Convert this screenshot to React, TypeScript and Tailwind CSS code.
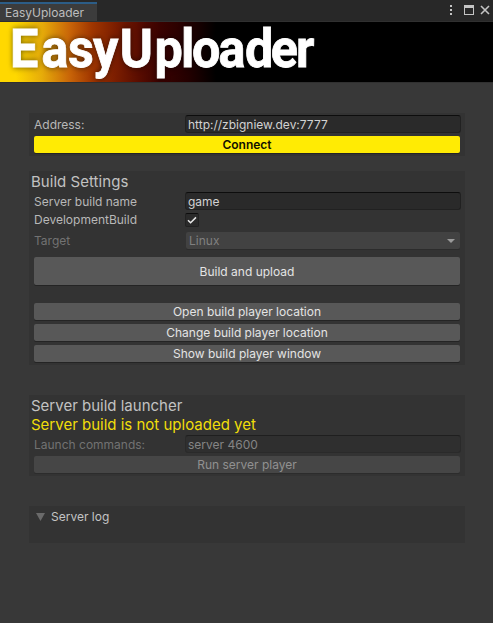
import React from "react";

function Label({ children, dim }: { children: React.ReactNode; dim?: boolean }) {
  return <span className={`block w-[151px] shrink-0 pt-px ${dim ? "text-[#727272]" : "text-[#b8b8b8]"}`}>{children}</span>;
}

function Field({ value, dim }: { value: string; dim?: boolean }) {
  return (
    <div
      className={`flex h-[18px] w-[276px] items-center rounded-[3px] border pt-[2px] pl-[2px] ${
        dim
          ? "border-[#2a2a2a] border-t-[#1f1f1f] bg-[#2f2f2f] text-[#858585]"
          : "border-[#212121] border-t-[#0d0d0d] bg-[#2a2a2a] text-[#d2d2d2]"
      }`}
    >
      {value}
    </div>
  );
}

function Button({ children, look = "bg-[#585858] text-[#e4e4e4] shadow-[0_1px_0_#242424]", size = "h-[17px]" }: {
  children: React.ReactNode;
  look?: string;
  size?: string;
}) {
  return (
    <button className={`mx-auto flex w-[426px] shrink-0 items-center justify-center rounded-[2px] ${size} ${look}`}>
      {children}
    </button>
  );
}

function Panel({ children, size }: { children?: React.ReactNode; size: string }) {
  return <section className={`ml-[29px] flex w-[436px] flex-col bg-[#333333] ${size}`}>{children}</section>;
}

export default function App() {
  return (
    <main className="flex h-[623px] w-[493px] flex-col overflow-hidden bg-[#383838] font-['Inter',sans-serif] text-[12px] leading-[18px] whitespace-nowrap">
      <header className="flex h-[22px] shrink-0 items-end justify-between border-b border-[#303030] bg-[#282828]">
        <div className="flex h-[19px] w-[97px] items-center border-t-2 border-[#2c5d87] bg-[#3c3c3c] pl-[5px] pt-px leading-[14px] text-[#bdbdbd]">
          EasyUploader
        </div>
        <svg className="h-[21px] w-[48px]" viewBox="445 0 48 21" shapeRendering="crispEdges">
          <path fill="#c4c4c4" d="M450 5h2v2h-2zM450 9h2v2h-2zM450 13h2v2h-2z" />
          <path fill="#c4c4c4" fillRule="evenodd" d="M464 5h10v10h-10zM465 8v6h8V8z" />
          <path shapeRendering="auto" fill="none" stroke="#c4c4c4" strokeWidth="1.6" d="M481 6l8 8M489 6l-8 8" />
        </svg>
      </header>
      <div className="h-[60px] shrink-0 bg-[linear-gradient(90deg,#ffd800_0px,#ffd800_16px,#e6ac0a_42px,#c86408_70px,#a03600_92px,#7c1e00_115px,#580c00_140px,#3a0200_160px,#240000_188px,#000000_216px)]">
        <svg className="h-[60px] w-[493px]" viewBox="0 0 493 60">
          <text
            transform="scale(0.95 1)"
            x="10.5 43.7 71.6 97.9 126 162.6 190.5 202 230 258 285 311.5"
            y="45"
            fill="#ffffff"
            stroke="#ffffff"
            strokeWidth="0.8"
            strokeLinejoin="miter"
            className="font-['Roboto',sans-serif] text-[53px] leading-none font-bold [filter:drop-shadow(0_0_3px_rgba(0,0,0,.55))]"
          >
            EasyUploader
          </text>
        </svg>
      </div>

      <div className="h-[31px] shrink-0 border-t border-[#303030]" />
      <Panel size="h-[43px] pt-[2px]">
        <div className="flex h-[18px] items-center pl-[5px]">
          <Label>Address:</Label>
          <Field value="http://zbigniew.dev:7777" />
        </div>
        <div className="h-[3px]" />
        <Button look="bg-[#ffeb04] font-semibold text-[#111100] shadow-[0_1px_0_#242424]">Connect</Button>
      </Panel>

      <div className="h-[15px] shrink-0" />
      <Panel size="h-[194px]">
        <h2 className="h-[21px] pl-[2px] text-[15px] leading-[21px] tracking-[0.04px] text-[#c2c2c2]">Build Settings</h2>
        <div className="flex h-[18px] items-center pl-[5px]">
          <Label>Server build name</Label>
          <Field value="game" />
        </div>
        <div className="flex h-[18px] items-center pl-[5px]">
          <Label>DevelopmentBuild</Label>
          <span className="mt-px flex size-[14px] items-center justify-center rounded-[2px] border border-[#212121] border-t-[#0d0d0d] bg-[#2a2a2a]">
            <svg className="size-[12px]" viewBox="0 0 12 12">
              <path d="M2 6.2l2.6 2.6L10 3.4" fill="none" stroke="#e8e8e8" strokeWidth="1.5" />
            </svg>
          </span>
        </div>
        <div className="mt-[4px] flex h-[17px] items-center pl-[5px]">
          <Label dim>Target</Label>
          <div className="ml-px flex h-[17px] w-[274px] items-center justify-between rounded-[2px] bg-[#424242] pl-[3px] pr-[5px] text-[#808080] shadow-[0_1px_0_#2c2c2c]">
            Linux
            <svg className="h-[4px] w-[8px]" viewBox="0 0 8 4">
              <path d="M0 0h8L4 4z" fill="#9a9a9a" />
            </svg>
          </div>
        </div>
        <div className="h-[8px]" />
        <Button size="h-[28px] pt-px">Build and upload</Button>
        <div className="h-[18px]" />
        <div className="flex flex-col gap-[4px]">
          <Button>Open build player location</Button>
          <Button>Change build player location</Button>
          <Button>Show build player window</Button>
        </div>
      </Panel>

      <div className="h-[30px] shrink-0" />
      <Panel size="h-[81px]">
        <h2 className="h-[21px] pl-[2px] text-[15px] leading-[21px] text-[#c2c2c2]">Server build launcher</h2>
        <p className="h-[19px] pl-[2px] text-[15px] leading-[18px] text-[#f0dd0a]">Server build is not uploaded yet</p>
        <div className="flex h-[18px] items-center pl-[5px]">
          <Label dim>Launch commands:</Label>
          <Field value="server 4600" dim />
        </div>
        <div className="h-[3px]" />
        <Button look="bg-[#464646] text-[#919191] shadow-[0_1px_0_#2c2c2c]">Run server player</Button>
      </Panel>

      <div className="h-[30px] shrink-0" />
      <Panel size="h-[37px] pt-[2px]">
        <div className="flex h-[18px] items-center pl-[7px] text-[#c4c4c4]">
          <svg className="mr-[6px] h-[8px] w-[9px]" viewBox="0 0 9 8">
            <path d="M0 0h9L4.5 8z" fill="#6a6a6a" />
          </svg>
          Server log
        </div>
      </Panel>
    </main>
  );
}
